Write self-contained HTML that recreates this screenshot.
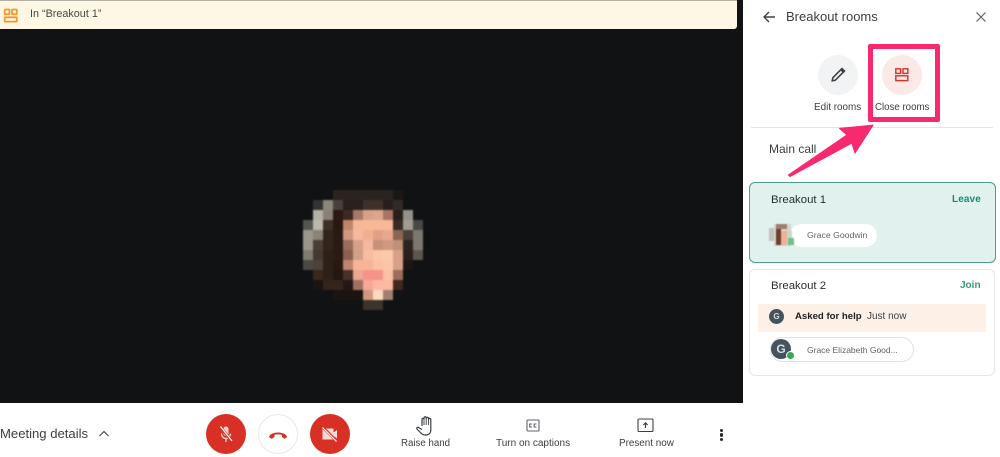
<!DOCTYPE html>
<html><head><meta charset="utf-8"><style>
html,body{margin:0;padding:0;width:1000px;height:457px;overflow:hidden;background:#fff}
body{position:relative;font-family:"Liberation Sans",sans-serif}
#w{position:absolute;left:0;top:0;width:1000px;height:457px;filter:blur(.35px)}
.a{position:absolute}
.t{position:absolute;white-space:nowrap;line-height:1}
</style></head><body><div id="w">
<div class="a" style="left:0;top:0;width:743px;height:403px;background:#111213"></div>
<div class="a" style="left:0;top:0;width:737px;height:29px;background:#fdf7e4;border-top:1px solid #b5b0a2;box-sizing:border-box;border-radius:0 0 3px 0"></div>
<svg class="a" style="left:3px;top:8px" width="15" height="15" viewBox="0 0 15 15" fill="none" stroke="#ef9a2d" stroke-width="1.800"><rect x="1.700" y="1.500" width="4.800" height="4.800" rx=".6"/><rect x="9" y="1.500" width="4.800" height="4.800" rx=".6"/><rect x="1.700" y="9.300" width="12.100" height="4.300" rx=".6"/></svg>
<div class="t" style="left:30px;top:9px;font-size:10.800px;color:#4a4844">In “Breakout 1”</div>

<svg class="a" style="left:293px;top:180px;filter:blur(.8px)" width="140" height="140" viewBox="293 180 140 140" shape-rendering="crispEdges">
<g id="face">
<rect x="333" y="190" width="60" height="10" fill="#2a2420"/><rect x="393" y="190" width="10" height="10" fill="#1a1816"/>
<rect x="313" y="200" width="10" height="10" fill="#333"/><rect x="323" y="200" width="10" height="10" fill="#8c857c"/><rect x="333" y="200" width="10" height="10" fill="#4a4038"/><rect x="343" y="200" width="20" height="10" fill="#2a201c"/><rect x="363" y="200" width="20" height="10" fill="#40302a"/><rect x="383" y="200" width="10" height="10" fill="#2a1e1c"/><rect x="393" y="200" width="10" height="10" fill="#332a26"/>
<rect x="313" y="210" width="10" height="10" fill="#b4b0a6"/><rect x="323" y="210" width="10" height="10" fill="#8a8076"/><rect x="333" y="210" width="10" height="10" fill="#2a1a14"/><rect x="343" y="210" width="10" height="10" fill="#3a2a22"/><rect x="353" y="210" width="10" height="10" fill="#a87868"/><rect x="363" y="210" width="10" height="10" fill="#d8a088"/><rect x="373" y="210" width="10" height="10" fill="#dca68c"/><rect x="383" y="210" width="10" height="10" fill="#a87464"/><rect x="393" y="210" width="10" height="10" fill="#2a1e1a"/><rect x="403" y="210" width="10" height="10" fill="#94908a"/>
<rect x="303" y="220" width="10" height="10" fill="#555550"/><rect x="313" y="220" width="10" height="10" fill="#bcb8ac"/><rect x="323" y="220" width="10" height="10" fill="#3c3028"/><rect x="333" y="220" width="10" height="10" fill="#281810"/><rect x="343" y="220" width="10" height="10" fill="#c08468"/><rect x="353" y="220" width="40" height="10" fill="#f8b898"/><rect x="393" y="220" width="10" height="10" fill="#3a2a24"/><rect x="403" y="220" width="10" height="10" fill="#a09c94"/><rect x="413" y="220" width="10" height="10" fill="#4a4844"/>
<rect x="303" y="230" width="10" height="10" fill="#9a968c"/><rect x="313" y="230" width="10" height="10" fill="#8a8478"/><rect x="323" y="230" width="10" height="10" fill="#32241c"/><rect x="333" y="230" width="10" height="10" fill="#2a1a12"/><rect x="343" y="230" width="10" height="10" fill="#d09880"/><rect x="353" y="230" width="10" height="10" fill="#f8b8a0"/><rect x="363" y="230" width="10" height="10" fill="#f0b090"/><rect x="373" y="230" width="10" height="10" fill="#e0a088"/><rect x="383" y="230" width="10" height="10" fill="#e8a890"/><rect x="393" y="230" width="10" height="10" fill="#8c6454"/><rect x="403" y="230" width="10" height="10" fill="#4a4038"/><rect x="413" y="230" width="10" height="10" fill="#7c7870"/>
<rect x="303" y="240" width="10" height="10" fill="#9a968c"/><rect x="313" y="240" width="10" height="10" fill="#4a3e34"/><rect x="323" y="240" width="10" height="10" fill="#32241c"/><rect x="333" y="240" width="10" height="10" fill="#2a1a12"/><rect x="343" y="240" width="10" height="10" fill="#9a6c5c"/><rect x="353" y="240" width="10" height="10" fill="#d8a088"/><rect x="363" y="240" width="10" height="10" fill="#f4b8a0"/><rect x="373" y="240" width="10" height="10" fill="#c89078"/><rect x="383" y="240" width="10" height="10" fill="#d09880"/><rect x="393" y="240" width="10" height="10" fill="#c09078"/><rect x="403" y="240" width="10" height="10" fill="#2c2420"/><rect x="413" y="240" width="10" height="10" fill="#7c7870"/>
<rect x="303" y="250" width="10" height="10" fill="#807c74"/><rect x="313" y="250" width="10" height="10" fill="#443830"/><rect x="323" y="250" width="10" height="10" fill="#2e2018"/><rect x="333" y="250" width="10" height="10" fill="#2a1a12"/><rect x="343" y="250" width="10" height="10" fill="#8c6050"/><rect x="353" y="250" width="10" height="10" fill="#d0a088"/><rect x="363" y="250" width="10" height="10" fill="#f8bca0"/><rect x="373" y="250" width="10" height="10" fill="#fcc4a8"/><rect x="383" y="250" width="10" height="10" fill="#fcc8ac"/><rect x="393" y="250" width="10" height="10" fill="#d8a088"/><rect x="403" y="250" width="10" height="10" fill="#2a201c"/><rect x="413" y="250" width="10" height="10" fill="#5c5850"/>
<rect x="303" y="260" width="10" height="10" fill="#4c4844"/><rect x="313" y="260" width="10" height="10" fill="#4c4238"/><rect x="323" y="260" width="10" height="10" fill="#2c2018"/><rect x="333" y="260" width="10" height="10" fill="#281810"/><rect x="343" y="260" width="10" height="10" fill="#c08470"/><rect x="353" y="260" width="20" height="10" fill="#f8b498"/><rect x="373" y="260" width="10" height="10" fill="#fcc0a4"/><rect x="383" y="260" width="10" height="10" fill="#fcc4a8"/><rect x="393" y="260" width="10" height="10" fill="#d8a088"/><rect x="403" y="260" width="10" height="10" fill="#1c1614"/>
<rect x="313" y="270" width="10" height="10" fill="#38281e"/><rect x="323" y="270" width="10" height="10" fill="#2c2018"/><rect x="333" y="270" width="10" height="10" fill="#241610"/><rect x="343" y="270" width="10" height="10" fill="#4a3028"/><rect x="353" y="270" width="10" height="10" fill="#eca890"/><rect x="363" y="270" width="20" height="10" fill="#f49488"/><rect x="383" y="270" width="10" height="10" fill="#fcc0a8"/><rect x="393" y="270" width="10" height="10" fill="#9c6c5c"/>
<rect x="313" y="280" width="10" height="10" fill="#1c1410"/><rect x="323" y="280" width="20" height="10" fill="#34241c"/><rect x="343" y="280" width="10" height="10" fill="#241814"/><rect x="353" y="280" width="10" height="10" fill="#a07060"/><rect x="363" y="280" width="10" height="10" fill="#f8a898"/><rect x="373" y="280" width="20" height="10" fill="#fcb8a0"/><rect x="393" y="280" width="10" height="10" fill="#40281e"/>
<rect x="333" y="290" width="30" height="10" fill="#1c1410"/><rect x="363" y="290" width="10" height="10" fill="#d09880"/><rect x="373" y="290" width="10" height="10" fill="#fcd8c0"/><rect x="383" y="290" width="10" height="10" fill="#a08070"/>
<rect x="363" y="300" width="20" height="10" fill="#3c342c"/>
</g></svg>

<!-- bottom bar -->
<div class="t" style="left:0;top:427px;font-size:13.100px;color:#3c4043">Meeting details</div>
<svg class="a" style="left:98px;top:429px" width="12" height="9" viewBox="0 0 12 9" fill="none" stroke="#3c4043" stroke-width="1.100"><path d="M1.500 7 L6 2.500 L10.500 7"/></svg>
<div class="a" style="left:206px;top:414px;width:40px;height:40px;border-radius:50%;background:#d93025"></div>
<svg class="a" style="left:206px;top:414px" width="40" height="40" viewBox="0 0 40 40" fill="none"><rect x="17.500" y="12.500" width="5" height="9.500" rx="2.500" fill="#f4d4d0"/><path d="M15.500 19.500c0 3 2 5 4.500 5s4.500-2 4.500-5M20 25v3" stroke="#f4d4d0" stroke-width="1.300"/><path d="M14.500 13L26 27.500" stroke="#d93025" stroke-width="2.800"/><path d="M14.500 12.500L26 27" stroke="#fff" stroke-width="1.200"/></svg>
<div class="a" style="left:258px;top:414px;width:40px;height:40px;border-radius:50%;background:#fff;border:1px solid #e8e8e8;box-sizing:border-box"></div>
<svg class="a" style="left:258px;top:414px" width="40" height="40" viewBox="0 0 40 40"><path d="M11.500 23.500c-.4-.4-.5-1-.2-1.500C13 19.500 16.500 18.500 20 18.500s7 1 8.700 3.500c.3.500.2 1.100-.2 1.500l-1 .9c-.5.400-1.100.4-1.600 0l-1.500-1.100c-.4-.3-.5-.7-.5-1.100v-1.300c-2.300-.7-5.100-.7-7.400 0v1.300c0 .4-.1.800-.5 1.100l-1.500 1.100c-.5.400-1.100.4-1.600 0z" fill="#d93025"/></svg>
<div class="a" style="left:310px;top:414px;width:40px;height:40px;border-radius:50%;background:#d93025"></div>
<svg class="a" style="left:310px;top:414px" width="40" height="40" viewBox="0 0 40 40"><path d="M12.500 14.500h11v4l3.500-2.500v8.500L23.500 22v3.500h-11z" fill="#f6dcd8"/><path d="M12.500 13L26.500 27" stroke="#d93025" stroke-width="2.800"/><path d="M12.500 13.500L26.500 27.500" stroke="#fff" stroke-width="1.200"/></svg>

<svg class="a" style="left:415px;top:415px" width="20" height="21" viewBox="0 0 20 21" fill="none" stroke="#3c4043" stroke-width="1.200" stroke-linejoin="round"><path d="M7 11V4.500c0-1.500 2-1.500 2 0V3c0-1.700 2.200-1.700 2.200 0v.5c0-1.500 2.300-1.500 2.300 0v1c0-1.500 2.300-1.500 2.300 0V15c0 3-2 5-4.500 5h-1.500c-2 0-3-1-4-2L2 14c-.8-1 .6-2.200 1.600-1.500L7 14.500"/><path d="M9 4.500V10M11.200 3.500V10M13.500 4.500V10" stroke-width=".9"/></svg>
<div class="t" style="left:401px;top:439px;font-size:9.700px;color:#3c4043">Raise hand</div>

<svg class="a" style="left:526px;top:419px" width="14" height="13" viewBox="0 0 14 13" fill="none" stroke="#5f6368" stroke-width="1.100"><rect x="1" y="1" width="12" height="11" rx=".8"/><path d="M6 5H3.700v3H6M10.500 5H8.200v3h2.300"/></svg>
<div class="t" style="left:496px;top:439px;font-size:10px;color:#3c4043">Turn on captions</div>

<svg class="a" style="left:637px;top:418px" width="18" height="15" viewBox="0 0 18 15" fill="none" stroke="#3c4043" stroke-width="1.100"><rect x="1" y="1" width="15" height="12.500" rx="1"/><path d="M8.500 10V5M6.300 7l2.200-2.200L10.700 7" stroke-width="1.200"/></svg>
<div class="t" style="left:619px;top:439px;font-size:9.900px;color:#3c4043">Present now</div>

<div class="a" style="left:719.500px;top:428.500px;width:3.500px;height:3.500px;border-radius:50%;background:#26282b"></div>
<div class="a" style="left:719.500px;top:433px;width:3.500px;height:3.500px;border-radius:50%;background:#26282b"></div>
<div class="a" style="left:719.500px;top:437.500px;width:3.500px;height:3.500px;border-radius:50%;background:#26282b"></div>

<!-- panel -->
<svg class="a" style="left:762px;top:10px" width="14" height="14" viewBox="0 0 14 14" fill="none" stroke="#3c4043" stroke-width="1.400"><path d="M13 7H2M7 2L2 7l5 5"/></svg>
<div class="t" style="left:786px;top:10px;font-size:13px;color:#3c4043">Breakout rooms</div>
<svg class="a" style="left:975px;top:11px" width="12" height="12" viewBox="0 0 12 12" fill="none" stroke="#5f6368" stroke-width="1.200"><path d="M1.500 1.500l9 9M10.500 1.500l-9 9"/></svg>

<div class="a" style="left:818px;top:55px;width:40px;height:40px;border-radius:50%;background:#f1f3f4"></div>
<svg class="a" style="left:830px;top:67px" width="16" height="16" viewBox="0 0 16 16" fill="none" stroke="#3c4043" stroke-width="1.500"><path d="M2.200 13.800l.6-3L10.800 2.700 13.300 5.200 5.200 13.300z"/><path d="M10.800 2.700l1.200-1.200 2.500 2.500-1.200 1.200" fill="#3c4043"/></svg>
<div class="t" style="left:814px;top:103px;font-size:9.900px;color:#3c4043">Edit rooms</div>

<div class="a" style="left:882px;top:55px;width:40px;height:40px;border-radius:50%;background:#fae9e6"></div>
<svg class="a" style="left:895px;top:68px" width="14" height="14" viewBox="0 0 14 14" fill="none" stroke="#d93025" stroke-width="1.400"><rect x=".8" y=".8" width="4.800" height="4.600"/><rect x="8" y=".8" width="4.800" height="4.600"/><rect x=".8" y="7.800" width="12" height="4.800"/></svg>
<div class="t" style="left:875px;top:103px;font-size:9.700px;color:#3c4043">Close rooms</div>

<div class="a" style="left:751px;top:127px;width:242px;height:1px;background:#e4e4e4"></div>
<div class="t" style="left:769px;top:143px;font-size:12px;color:#3c4043">Main call</div>

<div class="a" style="left:868px;top:44px;width:72px;height:78px;box-sizing:border-box;border:5px solid #f8296f;border-radius:2px"></div>
<svg class="a" style="left:780px;top:120px" width="100" height="60" viewBox="780 120 100 60"><path d="M788.300 175L846.700 135L839.300 128.300L873.300 125L855 153.300L851.700 143.300L790 176.700z" fill="#f8296f" stroke="#f8296f" stroke-width=".8" stroke-linejoin="round"/></svg>

<!-- card 1 -->
<div class="a" style="left:749px;top:182px;width:247px;height:81px;box-sizing:border-box;background:#e0f1ee;border:1px solid #4e9c8e;border-radius:6px"></div>
<div class="t" style="left:771px;top:195px;font-size:11.400px;color:#27312f">Breakout 1</div>
<div class="t" style="left:952px;top:195px;font-size:10px;font-weight:bold;color:#1b8a72;letter-spacing:.1px">Leave</div>
<div class="a" style="left:790px;top:224px;width:87px;height:23px;background:#fff;border-radius:12px"></div>
<svg class="a" style="left:768px;top:223px;filter:blur(.5px)" width="26" height="24" viewBox="0 0 26 24" shape-rendering="crispEdges"><rect x="1" y="5" width="7" height="13" fill="#c4c2bd"/><rect x="6" y="1" width="17" height="22" fill="#d8d4cf"/><rect x="8" y="1" width="11" height="5" fill="#a07c70"/><rect x="8" y="6" width="5" height="16" fill="#6a4030"/><rect x="13" y="8" width="6" height="14" fill="#eeb096"/><rect x="19" y="8" width="5" height="8" fill="#c8d8c8"/><rect x="20" y="15" width="6" height="7" fill="#6cc088"/></svg>
<div class="t" style="left:807px;top:231px;font-size:8.700px;color:#5f6368">Grace Goodwin</div>

<!-- card 2 -->
<div class="a" style="left:749px;top:269px;width:246px;height:107px;box-sizing:border-box;background:#fff;border:1px solid #e6e8e8;border-radius:6px"></div>
<div class="t" style="left:771px;top:281px;font-size:11.400px;color:#27312f">Breakout 2</div>
<div class="t" style="left:960px;top:281px;font-size:10px;font-weight:bold;color:#2f9e7c">Join</div>
<div class="a" style="left:758px;top:304px;width:228px;height:28px;background:#fdf0e6"></div>
<div class="a" style="left:769px;top:309px;width:15px;height:15px;border-radius:50%;background:#45535f;color:#d8dde0;font-size:8px;line-height:15px;text-align:center;font-weight:bold">G</div>
<div class="t" style="left:795px;top:312px;font-size:9.600px;font-weight:bold;color:#202124">Asked for help</div>
<div class="t" style="left:867px;top:312px;font-size:10px;color:#3c4043">Just now</div>
<div class="a" style="left:770px;top:337px;width:144px;height:25px;box-sizing:border-box;background:#fff;border:1px solid #dfe1e3;border-radius:13px"></div>
<div class="a" style="left:771px;top:339px;width:20px;height:20px;border-radius:50%;background:#45535f;color:#d8dde0;font-size:12px;line-height:20px;text-align:center;font-weight:bold">G</div>
<div class="a" style="left:785.500px;top:350.500px;width:7px;height:7px;box-sizing:content-box;border-radius:50%;background:#34a853;border:1px solid #fff"></div>
<div class="t" style="left:807px;top:346px;font-size:8.500px;color:#5f6368">Grace Elizabeth Good...</div>
</div></body></html>
